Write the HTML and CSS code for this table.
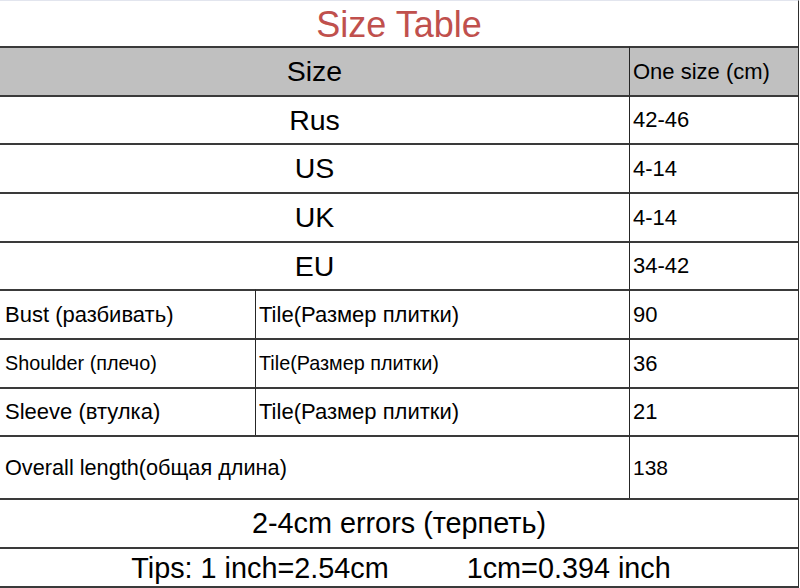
FILE: index.html
```html
<!DOCTYPE html>
<html lang="ru">
<head>
<meta charset="utf-8">
<title>Size Table</title>
<link rel="stylesheet" href="styles.css">
</head>
<body>
<div class="sheet">
  <div class="cell title span3 center">Size Table</div>

  <div class="cell head big span2 center">Size</div>
  <div class="cell head small val">One size (cm)</div>

  <div class="cell big span2 center">Rus</div>
  <div class="cell small val">42-46</div>

  <div class="cell big span2 center">US</div>
  <div class="cell small val">4-14</div>

  <div class="cell big span2 center">UK</div>
  <div class="cell small val">4-14</div>

  <div class="cell big span2 center">EU</div>
  <div class="cell small val">34-42</div>

  <div class="cell small label">Bust (разбивать)</div>
  <div class="cell small mid">Tile(Размер плитки)</div>
  <div class="cell small val">90</div>

  <div class="cell narrow label">Shoulder (плечо)</div>
  <div class="cell narrow mid">Tile(Размер плитки)</div>
  <div class="cell small val">36</div>

  <div class="cell small label">Sleeve (втулка)</div>
  <div class="cell small mid">Tile(Размер плитки)</div>
  <div class="cell small val">21</div>

  <div class="cell long label span2">Overall length(общая длина)</div>
  <div class="cell smaller val">138</div>

  <div class="cell bigger span3 center">2-4cm errors (терпеть)</div>

  <div class="cell bigger span3 center tips"><span>Tips: 1 inch=2.54cm</span><span>1cm=0.394 inch</span></div>
</div>
</body>
</html>
```

FILE: styles.css
```css
* { box-sizing: border-box; }

html, body {
  margin: 0;
  padding: 0;
  background: #ffffff;
}

.sheet {
  width: 799px;
  height: 588px;
  display: grid;
  grid-template-columns: 255px 374px 169px;
  grid-template-rows: 45px 49px 48px 49px 49px 48px 49px 49px 48px 63px 49px 39px;
  border-top: 1px solid #e2e5ee;
  border-right: 1px solid #2e2e2e;
  border-bottom: 2px solid #3a3a3a;
  font-family: "Liberation Sans", Arial, sans-serif;
  color: #000000;
}

.cell {
  display: flex;
  align-items: center;
  border-top: 2px solid #3a3a3a;
  white-space: nowrap;
  overflow: hidden;
}

.title {
  border-top: none;
  color: #c0504d;
  font-size: 36px;
  padding-top: 2px;
}

.span2 { grid-column: span 2; }
.span3 { grid-column: span 3; }

.center { justify-content: center; }

.head { background: #c0c0c0; }

.big { font-size: 28.5px; }
.bigger { font-size: 28.8px; }
.small { font-size: 22px; }
.narrow { font-size: 19.8px; }
.long { font-size: 21.7px; }
.smaller { font-size: 21px; }

.label { padding-left: 5px; }

.mid {
  border-left: 1px solid #262626;
  padding-left: 3px;
}

.val {
  border-left: 1px solid #262626;
  padding-left: 3px;
}

.tips { gap: 78px; padding-top: 2px; padding-left: 4px; }
```
